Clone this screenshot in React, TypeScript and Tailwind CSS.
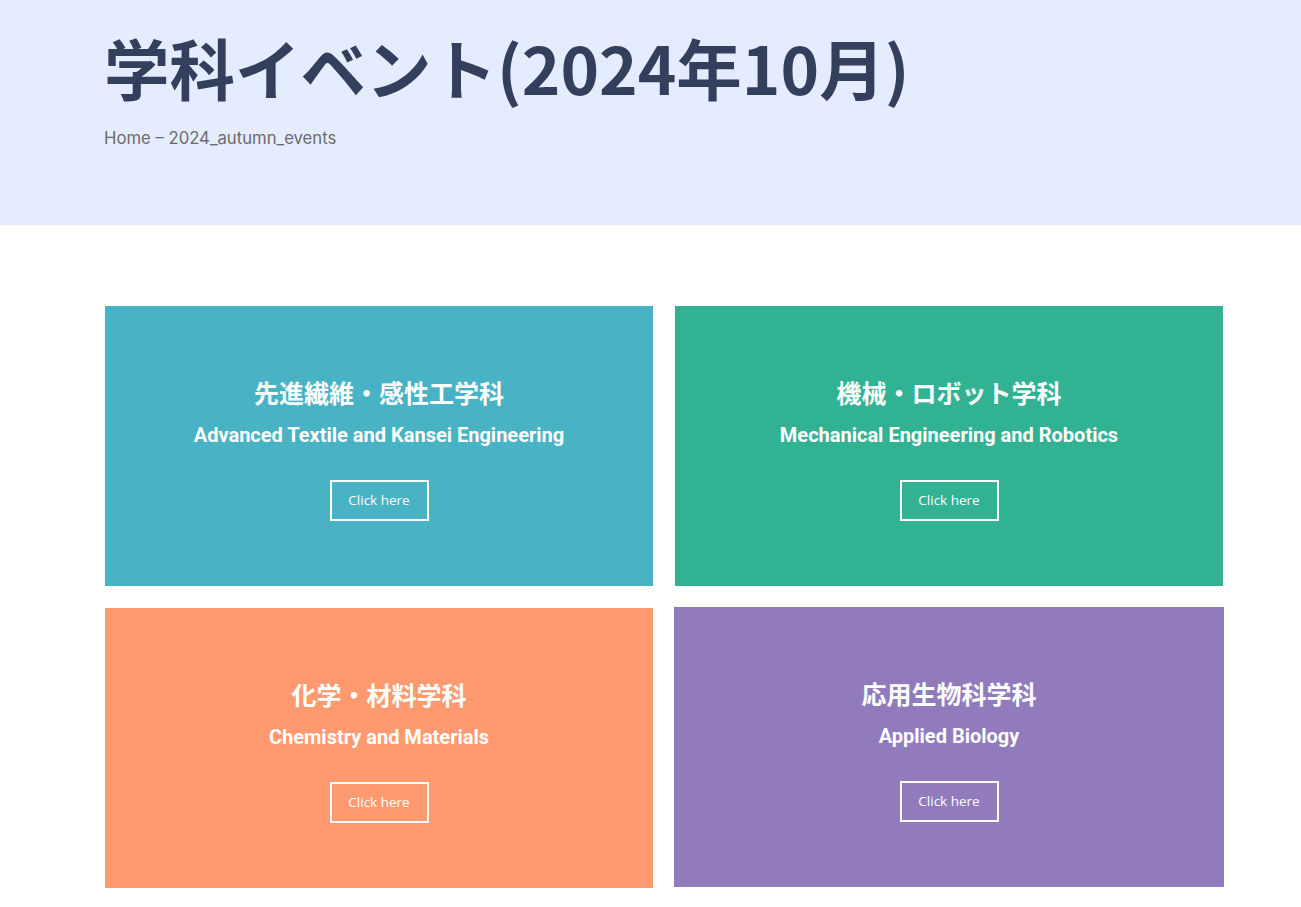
const departments = [
  { ja: '先進繊維・感性工学科', en: 'Advanced Textile and Kansei Engineering', bg: 'bg-[#47b3c4]', extra: '' },
  { ja: '機械・ロボット学科', en: 'Mechanical Engineering and Robotics', bg: 'bg-[#31b393]', extra: '' },
  { ja: '化学・材料学科', en: 'Chemistry and Materials', bg: 'bg-[#ff9a70]', extra: '' },
  { ja: '応用生物科学科', en: 'Applied Biology', bg: 'bg-[#917bbd]', extra: '-ml-px -mr-px -mt-px' },
]

function DeptCard({ ja, en, bg, extra }: { ja: string; en: string; bg: string; extra: string }) {
  return (
    <div className={`${bg} ${extra} h-[280px] flex flex-col items-center pt-[70px] text-white`}>
      <h2 className="text-[25px] leading-[32px] font-bold font-['Noto_Sans_CJK_JP',sans-serif]">{ja}</h2>
      <p className="mt-[14px] text-[20px] leading-[26px] font-bold font-['Roboto',sans-serif]">{en}</p>
      <a
        href="#"
        className="mt-[32px] w-[99px] h-[41px] border-2 border-white flex items-center justify-center text-[13.5px] font-['Open_Sans',sans-serif]"
      >
        Click here
      </a>
    </div>
  )
}

export default function App() {
  return (
    <div className="min-h-screen bg-white">
      {/* Page header */}
      <header className="bg-[#e6ecff] h-[225px] pl-[104px] pt-[22px]">
        <h1 className="text-[65.5px] leading-[90px] font-bold text-[#333f5c] font-['Noto_Sans_CJK_JP',sans-serif]">
          学科イベント(2024年10月)
        </h1>
        <div className="mt-[14px] text-[16.7px] text-[#6b6b6b] font-['Inter',sans-serif]">
          Home – 2024_autumn_events
        </div>
      </header>

      {/* Department cards */}
      <main className="pt-[81px] pb-[19px] pl-[105px]">
        <div className="w-[1118px] grid grid-cols-2 gap-[22px]">
          {departments.map((d) => (
            <DeptCard key={d.en} {...d} />
          ))}
        </div>
      </main>
    </div>
  )
}
